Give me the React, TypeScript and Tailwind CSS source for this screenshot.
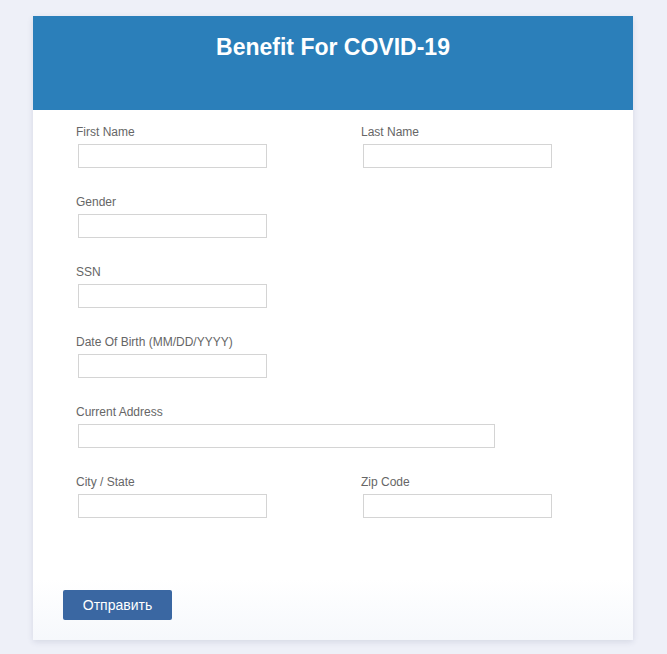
import React from "react";

function Field({ label, wide }: { label: string; wide?: boolean }) {
  return (
    <div className="flex flex-col">
      <label className="text-[12px] leading-[14px] text-[#666] h-[14px]">{label}</label>
      <input
        className={
          "mt-[5px] ml-[2px] h-[24px] border border-[#d4d4d4] bg-white outline-none " +
          (wide ? "w-[417px]" : "w-[189px]")
        }
      />
    </div>
  );
}

export default function App() {
  return (
    <div
      className="min-h-[654px] bg-[#eef0f8] pt-[16px] pb-[14px]"
      style={{ fontFamily: '"Liberation Sans", Arial, sans-serif' }}
    >
      <div className="ml-[33px] w-[600px] bg-white shadow-[0_2px_6px_rgba(40,50,90,0.12)]">
        <div className="h-[94px] bg-[#2b7fba] pt-[15px] text-center">
          <h1 className="text-[23px] font-bold leading-[32px] text-white">Benefit For COVID-19</h1>
        </div>
        <div className="flex flex-col gap-[27px] pl-[43px] pt-[15px]">
          <div className="flex">
            <div className="w-[285px]">
              <Field label="First Name" />
            </div>
            <Field label="Last Name" />
          </div>
          <Field label="Gender" />
          <Field label="SSN" />
          <Field label="Date Of Birth (MM/DD/YYYY)" />
          <Field label="Current Address" wide />
          <div className="flex">
            <div className="w-[285px]">
              <Field label="City / State" />
            </div>
            <Field label="Zip Code" />
          </div>
        </div>
        <div className="h-[122px] bg-gradient-to-b from-white via-white to-[#f6f8fc] pl-[30px] pt-[72px]">
          <button className="h-[30px] w-[109px] rounded-[2px] bg-[#3a67a2] text-[14px] text-white">
            Отправить
          </button>
        </div>
      </div>
    </div>
  );
}
